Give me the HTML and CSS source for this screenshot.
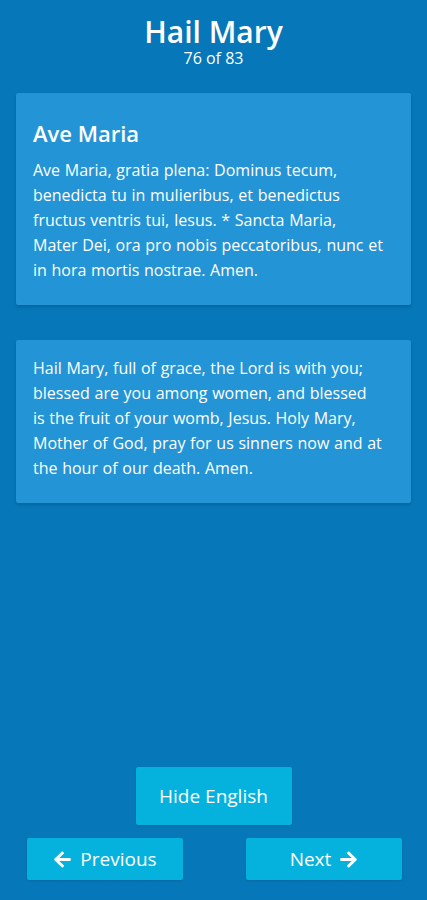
FILE: index.html
```html
<!DOCTYPE html>
<html lang="en">
<head>
  <meta charset="UTF-8" />
  <meta name="viewport" content="width=device-width, initial-scale=1.0" />
  <title>Hail Mary</title>
  <link rel="stylesheet" href="styles.css">
</head>
<body>
  <div class="page">
    <header class="header">
      <h1>Hail Mary</h1>
      <div class="count">76 of 83</div>
    </header>

    <div class="card">
      <h3>Ave Maria</h3>
      <p>Ave Maria, gratia plena: Dominus tecum,<br>
        benedicta tu in mulieribus, et benedictus<br>
        fructus ventris tui, Iesus. * Sancta Maria,<br>
        Mater Dei, ora pro nobis peccatoribus, nunc et<br>
        in hora mortis nostrae. Amen.</p>
    </div>

    <div class="card">
      <p>Hail Mary, full of grace, the Lord is with you;<br>
        blessed are you among women, and blessed<br>
        is the fruit of your womb, Jesus. Holy Mary,<br>
        Mother of God, pray for us sinners now and at<br>
        the hour of our death. Amen.</p>
    </div>

    <div class="controls">
      <button class="btn btn-toggle">Hide English</button>
      <div class="nav">
        <button class="btn btn-nav">
          <svg width="19" height="19" viewBox="0 0 448 512"><path fill="#fff" d="M257.5 445.1l-22.2 22.2c-9.4 9.4-24.6 9.4-33.9 0L7 273c-9.4-9.4-9.4-24.6 0-33.9L201.4 44.7c9.4-9.4 24.6-9.4 33.9 0l22.2 22.2c9.5 9.5 9.3 25-.4 34.3L136.6 216H424c13.3 0 24 10.7 24 24v32c0 13.3-10.7 24-24 24H136.6l120.5 114.8c9.8 9.3 10 24.8.4 34.3z"/></svg>
          Previous
        </button>
        <button class="btn btn-nav">
          Next
          <svg width="19" height="19" viewBox="0 0 448 512"><path fill="#fff" d="M190.5 66.9l22.2-22.2c9.4-9.4 24.6-9.4 33.9 0L441 239c9.4 9.4 9.4 24.6 0 33.9L246.6 467.3c-9.4 9.4-24.6 9.4-33.9 0l-22.2-22.2c-9.5-9.5-9.3-25 .4-34.3L311.4 296H24c-13.3 0-24-10.7-24-24v-32c0-13.3 10.7-24 24-24h287.4L190.9 101.2c-9.8-9.3-10-24.8-.4-34.3z"/></svg>
        </button>
      </div>
    </div>
  </div>
</body>
</html>
```

FILE: styles.css
```css
body {
  font-family: 'Open Sans', 'Noto Sans', sans-serif;
  background-color: #0677b8;
  color: #fff;
  margin: 0;
}
.page {
  min-height: 900px;
  display: flex;
  flex-direction: column;
  padding: 0 16px 20px;
  box-sizing: border-box;
}
.header {
  text-align: center;
  padding-top: 15px;
  margin-bottom: 27px;
}
.header h1 {
  font-size: 30px;
  font-weight: 600;
  line-height: 34px;
  margin: 0;
}
.count {
  font-size: 16px;
  line-height: 16px;
  margin-top: 1px;
}
.card {
  background-color: #2394d5;
  padding: 16px 12px 22px 17px;
  margin-bottom: 35px;
  border-radius: 2px;
  box-shadow: 0 2px 3px rgba(0,0,0,0.15);
}
.card h3 {
  font-size: 22px;
  font-weight: 600;
  line-height: 30px;
  margin: 9px 0 10px;
}
.card p {
  font-size: 16px;
  line-height: 25px;
  word-spacing: 0.5px;
  white-space: nowrap;
  margin: 0;
}
.controls {
  margin-top: auto;
  display: flex;
  flex-direction: column;
  align-items: center;
  gap: 13px;
}
.nav {
  display: flex;
  justify-content: space-between;
  width: 100%;
  box-sizing: border-box;
  padding: 0 9px 0 11px;
}
.btn {
  font-family: inherit;
  background-color: #05b2dd;
  color: #fff;
  border: none;
  border-radius: 2px;
  cursor: pointer;
  box-shadow: 0 1px 2px rgba(0,0,0,0.12);
}
.btn-toggle {
  width: 156px;
  height: 58px;
  font-size: 19px;
}
.btn-nav {
  width: 156px;
  height: 42px;
  font-size: 19px;
  display: flex;
  align-items: center;
  justify-content: center;
  gap: 8px;
}
```
